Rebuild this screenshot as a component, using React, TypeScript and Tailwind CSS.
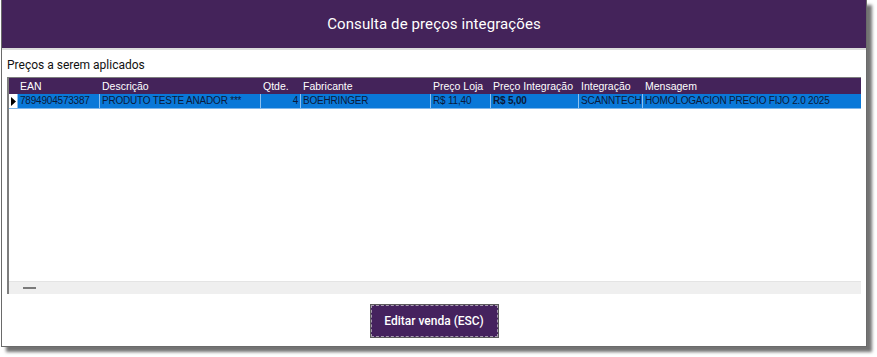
const cols = [
  { label: "EAN", w: "w-[82px]", value: "7894904573387", align: "text-left" },
  { label: "Descrição", w: "w-[161px]", value: "PRODUTO TESTE ANADOR ***", align: "text-left" },
  { label: "Qtde.", w: "w-[40px]", value: "4", align: "text-right" },
  { label: "Fabricante", w: "w-[130px]", value: "BOEHRINGER", align: "text-left" },
  { label: "Preço Loja", w: "w-[60px]", value: "R$ 11,40", align: "text-left" },
  { label: "Preço Integração", w: "w-[88px]", value: "R$ 5,00", align: "text-left", bold: true },
  { label: "Integração", w: "w-[64px]", value: "SCANNTECH", align: "text-left" },
  { label: "Mensagem", w: "flex-1", value: "HOMOLOGACION PRECIO FIJO 2.0 2025", align: "text-left" },
];

export default function App() {
  return (
    <div className="w-[877px] h-[357px] bg-white pl-[1px] font-['Roboto',sans-serif]">
      {/* Janela */}
      <div className="w-[866px] h-[347px] bg-white border border-[#6a6a6a] border-t-0 shadow-[5px_5px_3px_rgba(0,0,0,0.55)] flex flex-col">
        {/* Cabeçalho */}
        <div className="h-[50px] bg-[#44235a] border-b-2 border-[#dcdcdc] flex items-center justify-center pt-[1px]">
          <span className="text-white text-[15px] tracking-[0.1px]">Consulta de preços integrações</span>
        </div>

        <div className="flex-1 flex flex-col pl-[5px] pr-[5px]">
          <div className="h-[27px] flex items-end pb-[3px] text-[12px] text-[#111]">
            Preços a serem aplicados
          </div>

          {/* Grid */}
          <div className="h-[217px] border-l-2 border-t border-[#7d7d7d] flex flex-col bg-white font-['Liberation_Sans',Arial,sans-serif]">
            <div className="h-[16px] bg-[#44235a] text-white text-[10.5px] flex">
              <div className="w-[8px]" />
              {cols.map((c) => (
                <div key={c.label} className={`${c.w} px-[3px] leading-[16px] whitespace-nowrap overflow-hidden`}>
                  {c.label}
                </div>
              ))}
            </div>
            <div className="h-[15px] bg-[#0a78d8] text-[#0a1a3a] text-[10px] tracking-[-0.2px] flex border-b border-[#7fb6ea]">
              <div className="w-[8px] bg-white flex items-center justify-center">
                <svg width="5" height="9" viewBox="0 0 5 9">
                  <path d="M0 0 L5 4.5 L0 9 Z" fill="#000" />
                </svg>
              </div>
              {cols.map((c) => (
                <div
                  key={c.label}
                  className={`${c.w} ${c.align} ${c.bold ? "font-bold" : ""} px-[2px] leading-[14px] whitespace-nowrap overflow-hidden border-l border-[#8cc0ef]`}
                >
                  {c.value}
                </div>
              ))}
            </div>
            <div className="flex-1" />
            <div className="h-[13px] bg-[#efefef] border-t border-[#e4e4e4] flex items-center pl-[14px]">
              <div className="w-[13px] h-[2px] bg-[#7a7a7a]" />
            </div>
          </div>

          <div className="flex-1 flex items-center justify-center pt-[2px]">
            <button className="w-[127px] h-[32px] bg-[#45225e] border border-dashed border-[#a89cb0] outline outline-1 outline-[#5b5b5b] text-white text-[12px] font-medium">
              Editar venda (ESC)
            </button>
          </div>
        </div>
      </div>
    </div>
  );
}
